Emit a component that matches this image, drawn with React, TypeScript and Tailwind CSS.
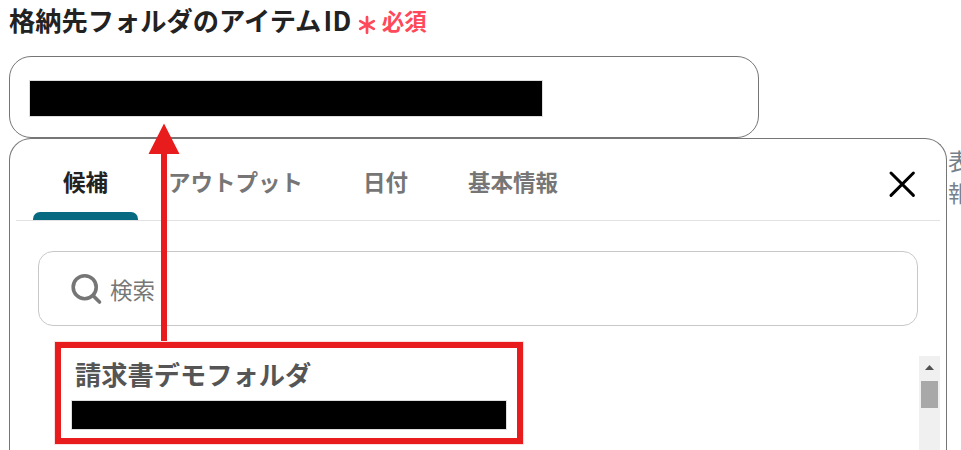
const tabs = [
  { id: "candidates", label: "候補" },
  { id: "output", label: "アウトプット" },
  { id: "date", label: "日付" },
  { id: "basic", label: "基本情報" },
]

function RequiredMark() {
  return (
    <span className="flex items-center text-[#ff4859]">
      <svg width="18" height="20" viewBox="0 0 18 20" className="mt-[9px]" fill="none" stroke="currentColor" strokeWidth="2.7" strokeLinecap="round">
        <path d="M9 2.2v15.6M2.2 6.1l13.6 7.8M15.8 6.1L2.2 13.9" />
      </svg>
      <span className="ml-[6px] text-[22.5px] leading-8 font-bold">必須</span>
    </span>
  )
}

function SearchBox() {
  return (
    <div className="mx-[28px] mt-[30px] flex h-[75px] items-center rounded-[15px] border border-[#c8c8c8] pl-8">
      <svg width="32" height="32" viewBox="0 0 32 32" fill="none" stroke="#767676" strokeWidth="3.6" strokeLinecap="round">
        <circle cx="13.7" cy="14.2" r="11.5" />
        <path d="M22.2 22.7l6.3 6.3" />
      </svg>
      <span className="mt-[2px] ml-[7px] text-[22.5px] text-[#767676]">検索</span>
    </div>
  )
}

function Scrollbar() {
  return (
    <div className="mt-[30px] mr-[6px] w-[21px] bg-[#f0f0f0]">
      <svg width="21" height="25" viewBox="0 0 21 25">
        <path d="M6 14l4.5-5 4.5 5z" fill="#505050" />
      </svg>
      <div className="ml-[2px] h-[27px] w-[17px] bg-[#a8a8a8]" />
    </div>
  )
}

export default function App() {
  return (
    <div className="relative h-[450px] w-[961px] overflow-hidden bg-white pl-[9px] font-['Noto_Sans_CJK_JP',sans-serif]">
      {/* Field label */}
      <div className="flex h-14 items-start pt-1">
        <h1 className="mr-[6px] text-[26.25px] leading-8 font-bold whitespace-nowrap text-[#222]">
          格納先フォルダのアイテム<span className="ml-[2px] tracking-[0.5px]">ID</span>
        </h1>
        <RequiredMark />
      </div>

      {/* Input with masked value */}
      <div className="h-[82px] w-[750px] rounded-[22px] border border-[#767676] pt-[23px] pl-[19px]">
        <div className="h-[37px] w-[514px] border border-[#ddd] bg-black" />
      </div>

      <div className="flex h-[312px]">
        {/* Suggestion panel */}
        <section className="flex w-[938px] shrink-0 flex-col rounded-t-[22px] border border-b-0 border-[#767676]">
          <div className="mx-[6px] flex h-[82px] items-center justify-between border-b border-[#e2e2e2] pl-[17px]">
            <div className="flex h-full">
              {tabs.map((tab, i) => (
                <button
                  key={tab.id}
                  className={`relative px-[30px] pt-[5px] text-[22.5px] font-bold ${i === 0 ? "text-[#222]" : "text-[#767676]"}`}
                >
                  {tab.label}
                  {i === 0 && <span className="absolute bottom-0 left-0 h-2 w-full rounded-t-[7px] bg-[#086a80]" />}
                </button>
              ))}
            </div>
            <svg width="28" height="28" viewBox="0 0 28 28" className="mt-2 mr-6" stroke="#000" strokeWidth="3" strokeLinecap="round">
              <path d="M3 3l22.4 22.4M25.4 3L3 25.4" />
            </svg>
          </div>

          <SearchBox />

          <div className="flex flex-1 justify-between">
            <div className="mt-4 ml-[45px] flex h-[102px] w-[468px] shrink-0 flex-col border-[6px] border-[#e81c1c] pt-[6px] pl-[10px] outline outline-[#fbdede]">
              <p className="ml-1 text-[26.25px] leading-10 font-bold text-[#555]">請求書デモフォルダ</p>
              <div className="mt-[6px] h-[30px] w-[436px] shrink-0 border border-[#ddd] bg-black" />
            </div>
            <Scrollbar />
          </div>
        </section>

        {/* Help text beside the panel */}
        <p className="ml-px w-12 shrink-0 pt-[6px] text-[22.5px] leading-8 text-[#76808b]">
          表<br />報
        </p>
      </div>

      {/* Arrow from the list item to the field */}
      <svg className="absolute top-[123px] left-[148px]" width="32" height="218" viewBox="0 0 32 218" fill="#e81c1c">
        <path d="M16 .5L31.5 31H19v187h-6V31H.5z" />
      </svg>
    </div>
  )
}
